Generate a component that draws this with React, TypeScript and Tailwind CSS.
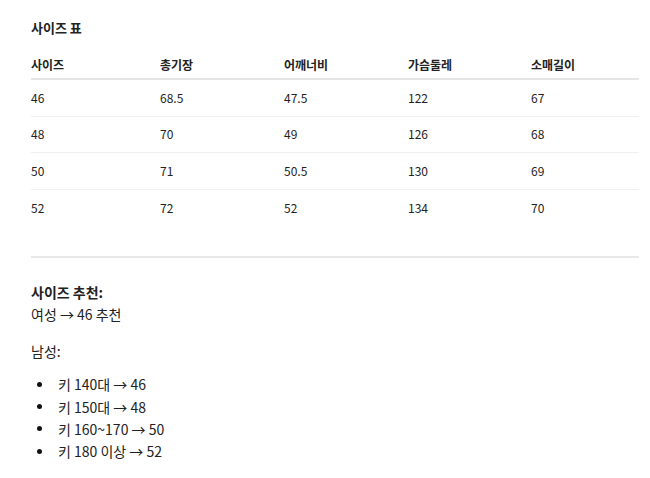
const headers = ["사이즈", "총기장", "어깨너비", "가슴둘레", "소매길이"]

const rows = [
  ["46", "68.5", "47.5", "122", "67"],
  ["48", "70", "49", "126", "68"],
  ["50", "71", "50.5", "130", "69"],
  ["52", "72", "52", "134", "70"],
]

const menSizes = ["키 140대 → 46", "키 150대 → 48", "키 160~170 → 50", "키 180 이상 → 52"]

const cols = "grid grid-cols-[129px_124px_124px_123px_1fr]"

export default function App() {
  return (
    <div
      className="min-h-screen bg-white px-[31px] pt-[19px] text-[#222]"
      style={{ fontFamily: '"Noto Sans CJK KR", "Noto Sans", sans-serif' }}
    >
      <h2 className="text-[13px] font-bold leading-[18px]">사이즈 표</h2>

      <div className="mt-[19px] w-[608px]">
        <div className={`${cols} border-b-2 border-[#e5e5e5] pb-[4px] text-[12px] font-bold leading-[18px]`}>
          {headers.map((h) => (
            <div key={h}>{h}</div>
          ))}
        </div>
        {rows.map((r, i) => (
          <div
            key={r[0]}
            className={`${cols} h-[36.5px] items-center text-[12px] ${i < rows.length - 1 ? "border-b border-[#f0f0f0]" : ""}`}
          >
            {r.map((c, j) => (
              <div key={j}>{c}</div>
            ))}
          </div>
        ))}
      </div>

      <hr className="mt-[30px] w-[608px] border-t-2 border-[#e8e8e8]" />

      <div className="mt-[23px] text-[14px] leading-[22px]">
        <p className="font-bold">사이즈 추천:</p>
        <p>여성 → 46 추천</p>
        <p className="mt-[15px]">남성:</p>
        <ul className="mt-[11px]">
          {menSizes.map((m) => (
            <li key={m} className="flex h-[22.4px] items-center">
              <span className="ml-[6px] mr-[16px] h-[5px] w-[5px] rounded-full bg-[#111]" />
              {m}
            </li>
          ))}
        </ul>
      </div>
    </div>
  )
}
